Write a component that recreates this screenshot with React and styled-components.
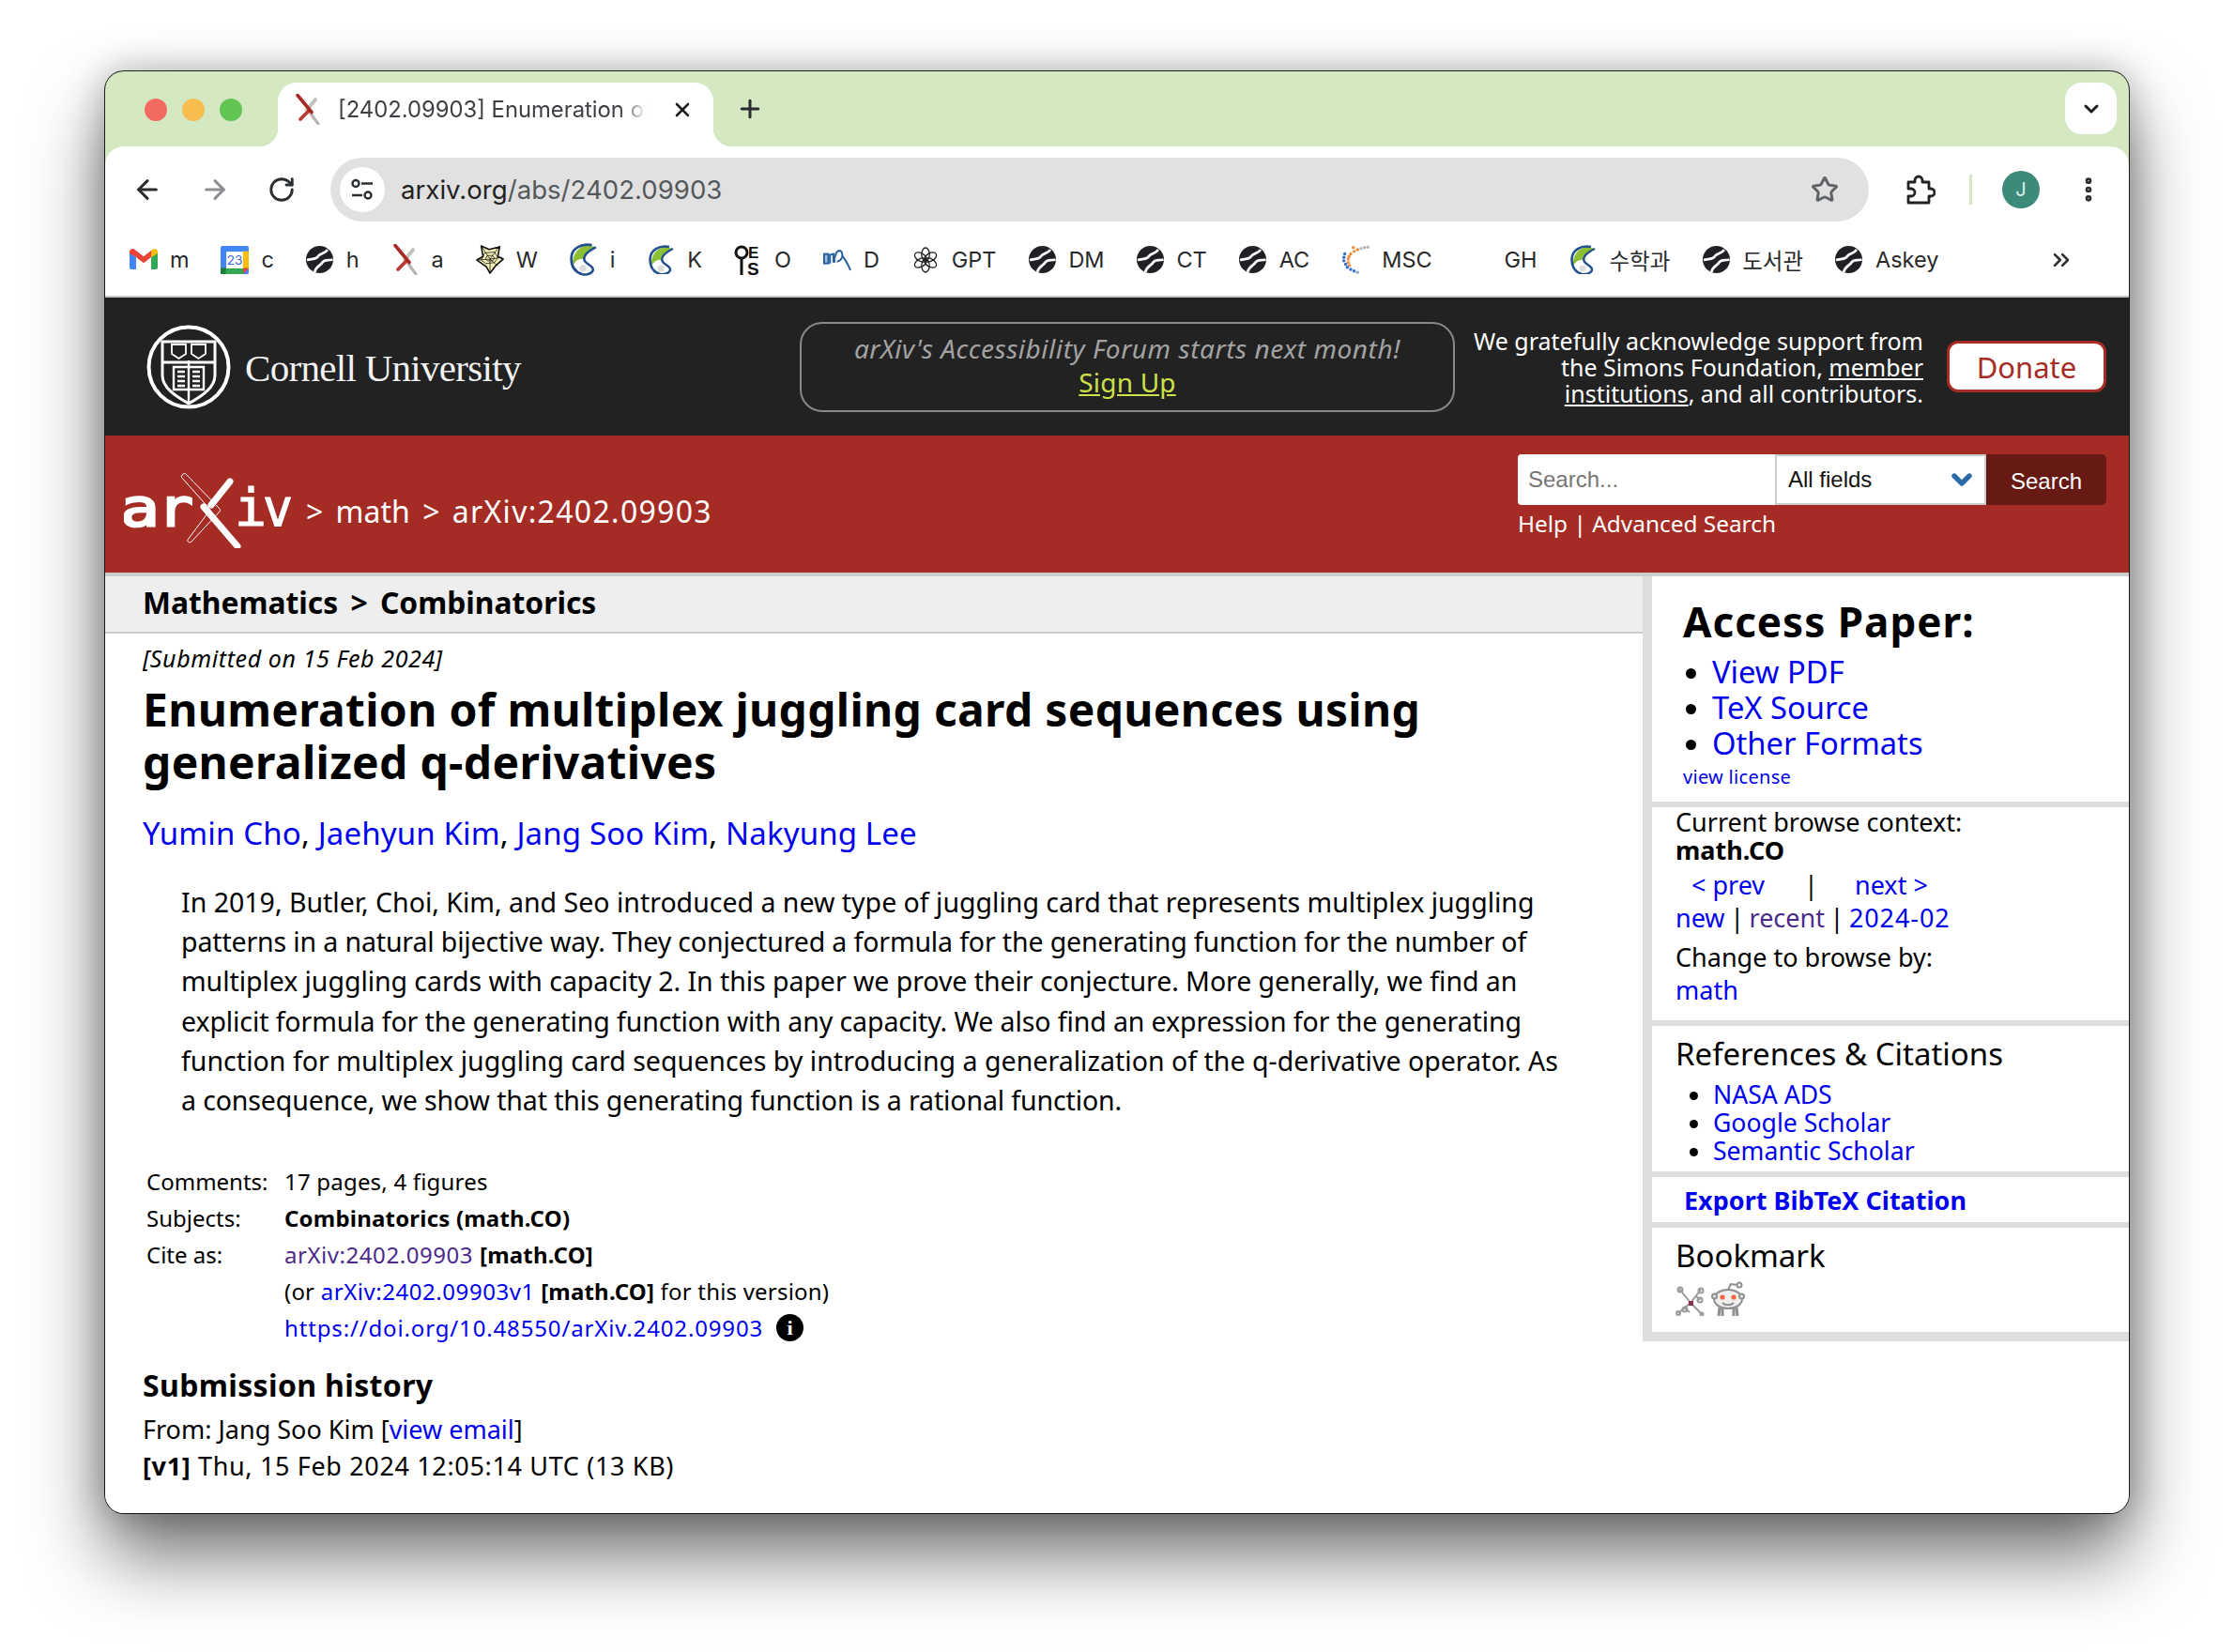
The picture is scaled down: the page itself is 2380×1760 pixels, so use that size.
import styled, { createGlobalStyle } from 'styled-components';
import { ArrowLeft, ArrowRight, RotateCw, Star, X, Plus, ChevronDown, EllipsisVertical, ChevronsRight } from 'lucide-react';

const GlobalStyle = createGlobalStyle`
  html, body { margin: 0; padding: 0; background: #fff; }
  * { box-sizing: border-box; }
  a { text-decoration: none; color: #0000ee; }
`;

const page = `"Noto Sans", "DejaVu Sans", sans-serif`;
const ui = `Inter, "Noto Sans CJK KR", sans-serif`;

const Stage = styled.div`
  width: 2380px;
  height: 1760px;
  padding: 76px 112px 0 112px;
  overflow: hidden;
`;

const Window = styled.div`
  width: 2156px;
  height: 1536px;
  background: #d4e8c2;
  border-radius: 20px;
  overflow: hidden;
  box-shadow: 0 0 0 1px rgba(0, 0, 0, 0.85), 0 46px 80px rgba(0, 0, 0, 0.55), 0 0 40px rgba(0, 0, 0, 0.28);
`;

const WindowShell = styled.div`
  display: flex;
  flex-direction: column;
  height: 100%;
`;

/* ---- browser chrome ---- */
const TabBar = styled.div`
  height: 80px;
  flex: none;
  display: flex;
  align-items: flex-start;
  padding: 12px 13px 0 42px;
`;

const Lights = styled.div`
  display: flex;
  gap: 16px;
  margin: 17px 38px 0 0;
`;

const Light = styled.span`
  width: 24px;
  height: 24px;
  border-radius: 50%;
  background: ${p => p.$color};
`;

const Tab = styled.div`
  position: relative;
  width: 464px;
  height: 68px;
  background: #fff;
  border-radius: 20px 20px 0 0;
  display: flex;
  align-items: center;
  padding: 0 21px 11px 19px;
  &::before, &::after {
    content: '';
    position: absolute;
    bottom: 0;
    width: 20px;
    height: 20px;
  }
  &::before { left: -20px; background: radial-gradient(circle at 0 0, transparent 20px, #fff 20.5px); }
  &::after { right: -20px; background: radial-gradient(circle at 100% 0, transparent 20px, #fff 20.5px); }
`;

const TabTitle = styled.div`
  font: 400 23.8px ${ui};
  color: #3c3f43;
  width: 333px;
  margin-left: 19px;
  white-space: nowrap;
  -webkit-mask-image: linear-gradient(90deg, #000 90%, transparent 99%);
  mask-image: linear-gradient(90deg, #000 90%, transparent 99%);
`;

const TabClose = styled.span`
  margin-left: auto;
  display: flex;
  color: #1f1f1f;
`;

const NewTab = styled.span`
  margin: 13px 0 0 24px;
  display: flex;
  color: #2a2d30;
`;

const TabSearch = styled.span`
  margin-left: auto;
  width: 55px;
  height: 55px;
  border-radius: 18px;
  background: #fff;
  display: flex;
  align-items: center;
  justify-content: center;
  color: #1f1f1f;
`;

const Toolbar = styled.div`
  height: 92px;
  flex: none;
  background: #fff;
  border-radius: 20px 20px 0 0;
  display: flex;
  align-items: center;
  padding: 0 0 0 29px;
`;

const ToolIcon = styled.span`
  width: ${p => p.$w || 72}px;
  display: flex;
  color: ${p => p.$color || '#2b2e31'};
`;

const AddressBar = styled.div`
  margin-left: -5px;
  width: 1639px;
  height: 68px;
  border-radius: 34px;
  background: #e1e1e1;
  display: flex;
  align-items: center;
  padding: 0 32px 0 10px;
`;

const InfoChip = styled.span`
  width: 48px;
  height: 48px;
  border-radius: 50%;
  background: #fff;
  display: flex;
  align-items: center;
  justify-content: center;
`;

const Url = styled.div`
  margin-left: 17px;
  font: 400 27.6px ${ui};
  color: #55585b;
  b { font-weight: 400; color: #222; }
`;

const StarSlot = styled.span`
  margin-left: auto;
  display: flex;
  color: #5f6368;
`;

const ToolbarEnd = styled.div`
  display: flex;
  align-items: center;
  margin-left: 37px;
`;

const Divider = styled.span`
  width: 3px;
  height: 32px;
  background: #d4e8c2;
  margin: 0 32px 0 36px;
`;

const Avatar = styled.span`
  width: 40px;
  height: 40px;
  border-radius: 50%;
  background: #3c8a7a;
  color: #dfeee9;
  font: 400 20px ${ui};
  display: flex;
  align-items: center;
  justify-content: center;
`;

const MoreSlot = styled.span`
  display: flex;
  margin-left: 36px;
  color: #2b2e31;
`;

const BookmarkBar = styled.div`
  height: 69px;
  flex: none;
  background: #fff;
  border-bottom: 2px solid #c9c9c9;
  padding: 0 58px 10px 26px;
  display: flex;
  align-items: center;
  gap: 33.9px;
`;

const Bookmark = styled.div`
  display: flex;
  align-items: center;
  gap: 13px;
  font: 400 23.5px ${ui};
  color: #28292b;
  white-space: nowrap;
`;

const FavSlot = styled.span`
  width: 30px;
  height: 32px;
  display: flex;
  align-items: center;
  justify-content: center;
`;

const Overflow = styled.span`
  margin-left: auto;
  display: flex;
  color: #2b2e31;
`;

/* ---- arxiv page ---- */
const Content = styled.div`
  flex: 1;
  min-height: 0;
  background: #fff;
  font-family: ${page};
  color: #000;
`;

const CornellBar = styled.div`
  height: 147px;
  background: #222;
  display: flex;
  align-items: center;
  padding: 0 24px 0 44px;
`;

const CornellLogo = styled.div`
  display: flex;
  align-items: center;
  gap: 15px;
`;

const CornellName = styled.span`
  font: 400 41px "Liberation Serif", serif;
  letter-spacing: -0.7px;
  color: #f2f2f2;
  position: relative;
  top: 1px;
`;

const Banner = styled.div`
  margin-left: auto;
  width: 698px;
  height: 96px;
  border: 2px solid #888;
  border-radius: 24px;
  text-align: center;
  padding-top: 8px;
  font-size: 28px;
  letter-spacing: 0.55px;
  line-height: 36px;
  color: #a3a3a3;
  font-style: italic;
`;

const SignUp = styled.a`
  display: block;
  width: fit-content;
  margin: 0 auto;
  font-style: normal;
  font-size: 28px;
  letter-spacing: 0.2px;
  color: #cde04a;
  text-decoration: underline;
`;

const Support = styled.div`
  width: 499px;
  text-align: right;
  font-size: 25px;
  line-height: 28px;
  color: #fff;
  margin-right: 25px;
  a { color: #fff; text-decoration: underline; }
`;

const Donate = styled.div`
  width: 170px;
  height: 55px;
  background: #fff;
  border: 3px solid #a52b25;
  border-radius: 12px;
  color: #a52b25;
  font-size: 31px;
  display: flex;
  align-items: center;
  justify-content: center;
`;

const RedBar = styled.div`
  height: 146px;
  background: #a52b25;
  display: flex;
  justify-content: space-between;
  padding: 20px 24px 0 20px;
  color: #fff;
`;

const Crumbs = styled.div`
  display: flex;
  align-items: center;
  gap: 12px;
  height: 80px;
  margin-top: 20px;
  font-size: 32px;
  word-spacing: 5px;
  white-space: nowrap;
`;

const CrumbId = styled.span`
  letter-spacing: 1.3px;
`;

const SearchArea = styled.div`
  width: 627px;
`;

const SearchForm = styled.div`
  display: flex;
  height: 54px;
  font: 400 24px "Liberation Sans", sans-serif;
`;

const SearchInput = styled.div`
  width: 274px;
  background: #fff;
  color: #757575;
  border-radius: 4px 0 0 4px;
  padding: 0 11px;
  line-height: 54px;
`;

const SearchSelect = styled.div`
  width: 225px;
  background: #fff;
  border: 2px solid #ccc;
  color: #111;
  padding: 0 8px 0 12px;
  display: flex;
  align-items: center;
  justify-content: space-between;
  svg { color: #2a6aa8; }
`;

const SearchButton = styled.div`
  flex: 1;
  background: #671913;
  border-radius: 0 5px 5px 0;
  color: #fff;
  display: flex;
  align-items: center;
  justify-content: center;
  padding-top: 4px;
`;

const SearchHelp = styled.div`
  margin-top: 3px;
  font-size: 24.4px;
  line-height: 34px;
`;

const Main = styled.div`
  display: grid;
  grid-template-columns: 1638px 1fr;
  border-top: 4px solid #ccc;
`;

const LeftColumn = styled.div`
  min-width: 0;
`;

const Breadcrumb = styled.div`
  height: 61px;
  background: #eee;
  border-bottom: 2px solid #ccc;
  padding-left: 40px;
  font-size: 31.8px;
  word-spacing: 5px;
  font-weight: 700;
  line-height: 56px;
`;

const Body = styled.div`
  padding-left: 40px;
`;

const Submitted = styled.div`
  margin-top: 11px;
  font-size: 25px;
  letter-spacing: 0.6px;
  line-height: 30px;
  font-style: italic;
`;

const Title = styled.h1`
  margin: 12px 0 0;
  font-size: 48px;
  letter-spacing: 0.3px;
  line-height: 56px;
  font-weight: 700;
  white-space: nowrap;
`;

const Authors = styled.div`
  margin-top: 28px;
  font-size: 33px;
  letter-spacing: 0.14px;
  line-height: 40px;
`;

const Abstract = styled.div`
  margin: 32px 0 0 41px;
  font-size: 28.5px;
  line-height: 42.2px;
  white-space: nowrap;
`;

const AbstractLine = styled.div`
  letter-spacing: ${p => p.$ls || 0}px;
`;

const Meta = styled.div`
  margin: 46px 0 0 4px;
  display: grid;
  grid-template-columns: 147px 1fr;
  grid-auto-rows: 39px;
  align-items: center;
  font-size: 24px;
  white-space: nowrap;
`;

const MetaValue = styled.div`
  grid-column: 2;
  display: flex;
  align-items: center;
  gap: 7px;
  letter-spacing: 0.2px;
  a { letter-spacing: 0.55px; }
  a.seen { color: #4b2a8c; }
  span { white-space: pre; }
`;

const DoiLink = styled.a`
  && { letter-spacing: 0.85px; }
`;

const InfoBadge = styled.span`
  width: 29px;
  height: 29px;
  border-radius: 50%;
  background: #000;
  color: #fff;
  margin-left: 7px;
  font: 700 22px "Liberation Serif", serif;
  display: flex;
  align-items: center;
  justify-content: center;
`;

const HistoryTitle = styled.h2`
  margin: 22px 0 0;
  font-size: 32px;
  letter-spacing: 0.35px;
  line-height: 40px;
  font-weight: 700;
`;

const HistoryText = styled.div`
  margin-top: 7px;
  font-size: 27px;
  line-height: 39px;
`;

const HistoryDate = styled.span`
  letter-spacing: 0.65px;
`;

const Sidebar = styled.div`
  background: #ddd;
  padding: 0 0 10px 10px;
  display: flex;
  flex-direction: column;
  gap: 6px;
  align-self: start;
`;

const Section = styled.div`
  background: #fff;
  height: ${p => p.$h}px;
  padding: ${p => p.$pt || 0}px 0 0 ${p => p.$pl || 25}px;
`;

const AccessTitle = styled.h2`
  margin: 0;
  font-size: 44px;
  letter-spacing: 1px;
  line-height: 50px;
  font-weight: 700;
`;

const AccessList = styled.ul`
  margin: 10px 0 0;
  padding: 0 0 0 31px;
  font-size: 32.7px;
  line-height: 38px;
  li::marker { font-size: 30px; }
`;

const License = styled.a`
  display: block;
  margin-top: 4px;
  font-size: 20px;
  letter-spacing: 0.3px;
  line-height: 26px;
`;

const ContextText = styled.div`
  font-size: 27px;
  line-height: ${p => p.$lh || 30}px;
  margin-top: ${p => p.$mt || 0}px;
  font-weight: ${p => (p.$bold ? 700 : 400)};
  word-spacing: ${p => p.$ws || 0}px;
  a.seen { color: #4b2a8c; }
`;

const Month = styled.a`
  letter-spacing: 0.9px;
`;

const PrevNext = styled.div`
  display: grid;
  grid-template-columns: 120px 54px 1fr;
  margin-top: 5px;
  padding-left: 17px;
  font-size: 27px;
  line-height: 34px;
`;

const SectionTitle = styled.h3`
  margin: 0;
  font-size: 33px;
  line-height: 40px;
  font-weight: 400;
`;

const RefList = styled.ul`
  margin: 8px 0 0;
  padding: 0 0 0 40px;
  font-size: 26.6px;
  line-height: 30px;
`;

const ExportLink = styled.a`
  display: block;
  font-size: 27px;
  line-height: 50px;
  font-weight: 700;
`;

const ShareRow = styled.div`
  display: flex;
  align-items: flex-end;
  gap: 6px;
  margin-top: 7px;
`;

/* ---- drawings ---- */
const GmailIcon = () => (
  <svg width="30" height="23" viewBox="0 0 30 23">
    <path d="M0 3.5V20a2 2 0 0 0 2 2h5V9z" fill="#4285f4" />
    <path d="M30 3.5V20a2 2 0 0 1-2 2h-5V9z" fill="#34a853" />
    <path d="M0 3.5C0 .6 3-1 5.400.8L15 8.200 24.600.8 23 9l-8 6.200L7 9 0 5z" fill="#ea4335" />
    <path d="M23 3l1.600-2.200C27-1 30 .6 30 3.500V5l-7 4z" fill="#fbbc04" />
  </svg>
);

const CalendarIcon = () => (
  <svg width="32" height="32" viewBox="0 0 32 32">
    <rect width="32" height="32" rx="2" fill="#4285f4" />
    <rect x="25" y="6" width="7" height="20" fill="#fbbc04" />
    <rect y="25" width="26" height="7" fill="#34a853" />
    <rect y="25" width="6" height="7" fill="#188038" />
    <path d="M26 25h6l-6 7z" fill="#ea4335" />
    <rect x="6.500" y="6.500" width="19" height="19" fill="#fff" />
    <text x="16" y="21.500" textAnchor="middle" fontFamily="Inter, sans-serif" fontSize="14.500" fill="#3367d6">23</text>
  </svg>
);

const GlobeIcon = () => (
  <svg width="29" height="29" viewBox="0 0 29 29" fill="none">
    <circle cx="14.500" cy="14.500" r="14.500" fill="#202124" />
    <path d="M23 4C20 8.500 15.500 7.500 13 11 11 14.500 6 13.500 1 15" stroke="#fff" strokeWidth="2.800" />
    <path d="M28.500 14.500C23 16 20.500 13.500 17.500 17.500 15.500 21 11 21 9 28" stroke="#fff" strokeWidth="2.800" />
  </svg>
);

const ArxivFavicon = () => (
  <svg width="26" height="33" viewBox="0 0 26 33">
    <path d="M12 17L21 6" stroke="#c4c2bc" strokeWidth="4" strokeLinecap="round" />
    <path d="M16 21l8 11" stroke="#b8b6b0" strokeWidth="3.200" strokeLinecap="round" />
    <path d="M5 27l9-9" stroke="#b93a32" strokeWidth="3.800" strokeLinecap="round" />
    <path d="M2 1.500l15 18" stroke="#a92a24" strokeWidth="3.600" strokeLinecap="round" />
  </svg>
);

const WebIcon = () => (
  <svg width="32" height="33" viewBox="0 0 32 33" fill="none" stroke="#111" strokeWidth="0.800">
    <path d="M16 32l-4-7-11-8 7-4-2-12 9 4 12-3-2 11 6 3-8 7z" fill="#f3f1b6" strokeWidth="1.700" strokeLinejoin="round" />
    <path d="M16 16L6 1M16 16l11-15M16 16L1 17M16 16l14-2M16 16v16M16 16l9 8" />
    <path d="M10 9l11 -1 4 6-4 6-10 1-5-4z M13 12l6 0 2 3-2 3-6 0-2-2z" />
  </svg>
);

const GinkgoIcon = ({ size = 29 }) => (
  <svg width={size} height={size * 1.18} viewBox="0 0 27 32" fill="none">
    <path d="M3 22C2 12 8 3 18 2L26 4C21 7 15 12 14 16 10 15 6 17 3 22z" fill="#8cc034" />
    <path d="M22 2C12 0 1 5 1.500 16 1.500 24 6 29 12 31" stroke="#234f8e" strokeWidth="2.600" />
    <path d="M26 4C18 8 12 13 15 18 18 22 24 23 23 27 22 31 15 32 12 31" stroke="#234f8e" strokeWidth="2.400" />
    <circle cx="13" cy="25" r="3.500" fill="#dcdcdc" />
  </svg>
);

const OeisIcon = () => (
  <svg width="30" height="32" viewBox="0 0 30 32">
    <circle cx="8" cy="8" r="6" fill="none" stroke="#111" strokeWidth="3" />
    <path d="M8 14v18" stroke="#111" strokeWidth="3" />
    <text x="15" y="14" fontFamily="Liberation Sans, sans-serif" fontWeight="700" fontSize="17" fill="#111">E</text>
    <text x="14" y="32" fontFamily="Liberation Sans, sans-serif" fontWeight="700" fontSize="19" fill="#111">S</text>
  </svg>
);

const DnaIcon = () => (
  <svg width="33" height="26" viewBox="0 0 33 26" fill="none" stroke="#2a5f9e" strokeWidth="2.200">
    <rect x="1" y="6" width="5" height="11" fill="#9cc0e0" />
    <path d="M8 17V7l4-1v10" />
    <path d="M13 16c0-9 3-14 6-14s4 4 3 8c-1 3-4 5-6 5" />
    <path d="M22 8c3 3 7 10 10 17" />
  </svg>
);

const OpenAiIcon = () => (
  <svg width="28" height="28" viewBox="0 0 28 28" fill="none" stroke="#222" strokeWidth="1.300">
    {[0, 60, 120, 180, 240, 300].map(a => (
      <ellipse key={a} cx="14" cy="8" rx="4.200" ry="7" transform={`rotate(${a} 14 14)`} />
    ))}
  </svg>
);

const mscDots = [
  [31, 2, '#a9b3be'], [27, 2.500, '#a9b3be'], [23, 3.500, '#b3bac2'], [19, 5, '#f08a3c'], [15, 7, '#f08a3c'], [11, 10, '#f08a3c'],
  [9, 13, '#f08a3c'], [8, 16, '#f08a3c'], [8, 20, '#f08a3c'], [9.500, 23.500, '#f08a3c'], [14, 2.500, '#f08a3c'], [4, 10, '#2f6fd0'],
  [3, 14, '#2f6fd0'], [3, 18, '#2f6fd0'], [5, 22, '#2f6fd0'], [7, 25.500, '#2f6fd0'], [11, 28, '#2f6fd0'], [15, 30, '#2f6fd0'], [19, 31.500, '#8aa4c8'],
];

const MscIcon = () => (
  <svg width="33" height="33" viewBox="0 0 33 33">
    {mscDots.map(([x, y, c]) => <circle key={`${x}-${y}`} cx={x} cy={y} r="1.900" fill={c} />)}
  </svg>
);

const TuneIcon = () => (
  <svg width="28" height="28" viewBox="0 0 28 28" fill="none" stroke="#2b2e31" strokeWidth="2.400">
    <circle cx="7" cy="7.500" r="3.500" />
    <path d="M13 7.500h12" />
    <circle cx="20" cy="20" r="3.500" />
    <path d="M3 20h11" />
  </svg>
);

const PuzzleIcon = () => (
  <svg width="34" height="34" viewBox="0 0 34 34" fill="none" stroke="#222" strokeWidth="2.800" strokeLinejoin="round">
    <path d="M5 9h7v-2a4 4 0 0 1 8 0v2h7v7h2a4 4 0 0 1 0 8h-2v7H5v-7h3a4 4 0 0 0 0-8H5z" />
  </svg>
);

const CornellSeal = () => (
  <svg width="90" height="90" viewBox="0 0 90 90" fill="none" stroke="#fff">
    <circle cx="45" cy="45" r="42.500" strokeWidth="4" />
    <path d="M17 18h56v36c0 13-14 22-28 30-14-8-28-17-28-30z" strokeWidth="3" />
    <path d="M17 40h56" strokeWidth="3" />
    <path d="M27 21h15v10l-7.500 5-7.500-5zM48 21h15v10l-7.500 5-7.500-5z" strokeWidth="1.800" />
    <path d="M29 45h32v24H29zM45 38v46" strokeWidth="2.400" />
    <path d="M33 50h8M33 55h8M33 60h8M33 65h8M49 50h8M49 55h8M49 60h8M49 65h8" strokeWidth="2.400" />
  </svg>
);

const logoLetters = [
  { ch: 'a', x: -4, len: 42, sw: 2.400 },
  { ch: 'r', x: 36, len: 38, sw: 2.400 },
  { ch: 'i', x: 118, len: 34, sw: 1.200 },
  { ch: 'v', x: 148, len: 32, sw: 1.200 },
];

const ArxivLogo = () => (
  <svg width="182" height="80" viewBox="0 0 182 80">
    {logoLetters.map(({ ch, x, len, sw }) => (
      <text key={ch} x={x} y="56" fontFamily="DejaVu Sans Mono, monospace" fontSize="55" fill="#fff" stroke="#fff" strokeWidth={sw} textLength={len} lengthAdjust="spacingAndGlyphs">{ch}</text>
    ))}
    <path d="M85 36L121 78" stroke="#fff" strokeWidth="7" strokeLinecap="round" />
    <path d="M93 34L113 9" stroke="#fff" strokeWidth="7" strokeLinecap="round" />
    <path d="M63 1l-2 3L92 39 68 71c-1 2 2 4 4 2l29-31c2-2 2-3 0-5L66 1c-1-1-2-1-3 0z" fill="none" stroke="#fff" strokeWidth="1" />
  </svg>
);

const ShareIcon = () => (
  <svg width="32" height="32" viewBox="0 0 32 32" fill="none" stroke="#9a9a9a" strokeWidth="2">
    <path d="M16 18L4 3M16 18L27 4M16 18L3 29M16 18L28 30M22 11l4 4M10 24l5 4" />
    <circle cx="5" cy="4" r="2.500" /><circle cx="27" cy="5" r="2.500" /><circle cx="26" cy="15" r="2.500" />
    <circle cx="10" cy="25" r="2.500" /><circle cx="3" cy="29" r="2" /><circle cx="28" cy="30" r="1.500" />
    <rect x="14" y="16" width="5" height="5" fill="#8d2f52" stroke="none" />
  </svg>
);

const RedditIcon = () => (
  <svg width="36" height="37" viewBox="0 0 36 37" fill="none" stroke="#8f8f8f" strokeWidth="2">
    <ellipse cx="18" cy="19" rx="15" ry="10" fill="#eee" />
    <circle cx="3.500" cy="16" r="2.500" fill="#eee" /><circle cx="32.500" cy="16" r="2.500" fill="#eee" />
    <path d="M18 9l3-6 7 1" />
    <circle cx="30" cy="4" r="2.500" />
    <circle cx="12" cy="17" r="2.600" fill="#f2643c" stroke="none" />
    <circle cx="24" cy="17" r="2.600" fill="#f2643c" stroke="none" />
    <path d="M12 23c3 3 9 3 12 0" />
    <path d="M9 28l-1 9M27 28l1 9M12 29v8M24 29v8" strokeWidth="3" />
  </svg>
);

const bookmarks = [
  { label: 'm', icon: <GmailIcon /> },
  { label: 'c', icon: <CalendarIcon /> },
  { label: 'h', icon: <GlobeIcon /> },
  { label: 'a', icon: <ArxivFavicon /> },
  { label: 'W', icon: <WebIcon /> },
  { label: 'i', icon: <GinkgoIcon /> },
  { label: 'K', icon: <GinkgoIcon size={27} /> },
  { label: 'O', icon: <OeisIcon /> },
  { label: 'D', icon: <DnaIcon /> },
  { label: 'GPT', icon: <OpenAiIcon /> },
  { label: 'DM', icon: <GlobeIcon /> },
  { label: 'CT', icon: <GlobeIcon /> },
  { label: 'AC', icon: <GlobeIcon /> },
  { label: 'MSC', icon: <MscIcon /> },
  { label: 'GH', icon: null },
  { label: '수학과', icon: <GinkgoIcon size={27} /> },
  { label: '도서관', icon: <GlobeIcon /> },
  { label: 'Askey', icon: <GlobeIcon /> },
];

const abstractLines = [
  { text: 'In 2019, Butler, Choi, Kim, and Seo introduced a new type of juggling card that represents multiplex juggling', ls: 0 },
  { text: 'patterns in a natural bijective way. They conjectured a formula for the generating function for the number of', ls: -0.14 },
  { text: 'multiplex juggling cards with capacity 2. In this paper we prove their conjecture. More generally, we find an', ls: -0.055 },
  { text: 'explicit formula for the generating function with any capacity. We also find an expression for the generating', ls: -0.1 },
  { text: 'function for multiplex juggling card sequences by introducing a generalization of the q-derivative operator. As', ls: 0.03 },
  { text: 'a consequence, we show that this generating function is a rational function.', ls: -0.12 },
];

export default function App() {
  return (
    <>
      <GlobalStyle />
      <Stage>
        <Window>
          <WindowShell>
            <TabBar>
              <Lights>
                <Light $color="#f36b60" />
                <Light $color="#f7bd4f" />
                <Light $color="#61c554" />
              </Lights>
              <Tab>
                <ArxivFavicon />
                <TabTitle>[2402.09903] Enumeration of</TabTitle>
                <TabClose><X size={24} strokeWidth={2.6} /></TabClose>
              </Tab>
              <NewTab><Plus size={30} strokeWidth={2.4} /></NewTab>
              <TabSearch><ChevronDown size={24} strokeWidth={3} /></TabSearch>
            </TabBar>
            <Toolbar>
              <ToolIcon><ArrowLeft size={32} strokeWidth={2.3} /></ToolIcon>
              <ToolIcon $color="#8d8f92"><ArrowRight size={32} strokeWidth={2.3} /></ToolIcon>
              <ToolIcon><RotateCw size={30} strokeWidth={2.3} /></ToolIcon>
              <AddressBar>
                <InfoChip><TuneIcon /></InfoChip>
                <Url><b>arxiv.org</b>/abs/2402.09903</Url>
                <StarSlot><Star size={30} strokeWidth={2.4} /></StarSlot>
              </AddressBar>
              <ToolbarEnd>
                <PuzzleIcon />
                <Divider />
                <Avatar>J</Avatar>
                <MoreSlot><EllipsisVertical size={32} strokeWidth={3} /></MoreSlot>
              </ToolbarEnd>
            </Toolbar>
            <BookmarkBar>
              {bookmarks.map(({ label, icon }) => (
                <Bookmark key={label}>
                  <FavSlot>{icon}</FavSlot>
                  {label}
                </Bookmark>
              ))}
              <Overflow><ChevronsRight size={28} strokeWidth={2.2} /></Overflow>
            </BookmarkBar>
            <Content>
              <CornellBar>
                <CornellLogo>
                  <CornellSeal />
                  <CornellName>Cornell University</CornellName>
                </CornellLogo>
                <Banner>
                  arXiv's Accessibility Forum starts next month!
                  <SignUp href="#">Sign Up</SignUp>
                </Banner>
                <Support>
                  We gratefully acknowledge support from<br />
                  the Simons Foundation, <a href="#">member</a><br />
                  <a href="#">institutions</a>, and all contributors.
                </Support>
                <Donate>Donate</Donate>
              </CornellBar>
              <RedBar>
                <Crumbs>
                  <ArxivLogo />
                  <span>&gt; math &gt; <CrumbId>arXiv:2402.09903</CrumbId></span>
                </Crumbs>
                <SearchArea>
                  <SearchForm>
                    <SearchInput>Search...</SearchInput>
                    <SearchSelect>All fields<ChevronDown size={32} strokeWidth={4} /></SearchSelect>
                    <SearchButton>Search</SearchButton>
                  </SearchForm>
                  <SearchHelp>Help | Advanced Search</SearchHelp>
                </SearchArea>
              </RedBar>
              <Main>
                <LeftColumn>
                  <Breadcrumb>Mathematics &gt; Combinatorics</Breadcrumb>
                  <Body>
                    <Submitted>[Submitted on 15 Feb 2024]</Submitted>
                    <Title>Enumeration of multiplex juggling card sequences using<br />generalized q-derivatives</Title>
                    <Authors>
                      <a href="#">Yumin Cho</a>, <a href="#">Jaehyun Kim</a>, <a href="#">Jang Soo Kim</a>, <a href="#">Nakyung Lee</a>
                    </Authors>
                    <Abstract>
                      {abstractLines.map(({ text, ls }) => <AbstractLine key={text} $ls={ls}>{text}</AbstractLine>)}
                    </Abstract>
                    <Meta>
                      <div>Comments:</div>
                      <MetaValue>17 pages, 4 figures</MetaValue>
                      <div>Subjects:</div>
                      <MetaValue><b>Combinatorics (math.CO)</b></MetaValue>
                      <div>Cite as:</div>
                      <MetaValue><a className="seen" href="#">arXiv:2402.09903</a> <b>[math.CO]</b></MetaValue>
                      <MetaValue><span>(or <a href="#">arXiv:2402.09903v1</a> <b>[math.CO]</b> for this version)</span></MetaValue>
                      <MetaValue><DoiLink href="#">https://doi.org/10.48550/arXiv.2402.09903</DoiLink><InfoBadge>i</InfoBadge></MetaValue>
                    </Meta>
                    <HistoryTitle>Submission history</HistoryTitle>
                    <HistoryText>
                      From: Jang Soo Kim [<a href="#">view email</a>]<br />
                      <HistoryDate><b>[v1]</b> Thu, 15 Feb 2024 12:05:14 UTC (13 KB)</HistoryDate>
                    </HistoryText>
                  </Body>
                </LeftColumn>
                <Sidebar>
                  <Section $h={240} $pt={23} $pl={33}>
                    <AccessTitle>Access Paper:</AccessTitle>
                    <AccessList>
                      <li><a href="#">View PDF</a></li>
                      <li><a href="#">TeX Source</a></li>
                      <li><a href="#">Other Formats</a></li>
                    </AccessList>
                    <License href="#">view license</License>
                  </Section>
                  <Section $h={227} $pt={1}>
                    <ContextText>Current browse context:</ContextText>
                    <ContextText $bold>math.CO</ContextText>
                    <PrevNext>
                      <a href="#">&lt; prev</a>
                      <span>|</span>
                      <a href="#">next &gt;</a>
                    </PrevNext>
                    <ContextText $lh={34} $mt={1} $ws={-1.5}>
                      <a href="#">new</a> | <a className="seen" href="#">recent</a> | <Month href="#">2024-02</Month>
                    </ContextText>
                    <ContextText $lh={34} $mt={8}>Change to browse by:</ContextText>
                    <ContextText $lh={34} $mt={1}><a href="#">math</a></ContextText>
                  </Section>
                  <Section $h={155} $pt={10}>
                    <SectionTitle>References &amp; Citations</SectionTitle>
                    <RefList>
                      <li><a href="#">NASA ADS</a></li>
                      <li><a href="#">Google Scholar</a></li>
                      <li><a href="#">Semantic Scholar</a></li>
                    </RefList>
                  </Section>
                  <Section $h={48} $pl={34}>
                    <ExportLink href="#">Export BibTeX Citation</ExportLink>
                  </Section>
                  <Section $h={111} $pt={10}>
                    <SectionTitle>Bookmark</SectionTitle>
                    <ShareRow>
                      <ShareIcon />
                      <RedditIcon />
                    </ShareRow>
                  </Section>
                </Sidebar>
              </Main>
            </Content>
          </WindowShell>
        </Window>
      </Stage>
    </>
  );
}
